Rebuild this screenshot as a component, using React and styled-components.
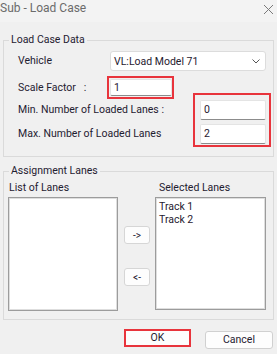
import React from 'react';
import styled, { createGlobalStyle } from 'styled-components';

const Global = createGlobalStyle`
  html, body {
    margin: 0;
    padding: 0;
    background: #f0f0f0;
  }
  body {
    font-family: Roboto, "Noto Sans", sans-serif;
    font-size: 10.5px;
    color: #1f2030;
  }
`;

const Window = styled.div`
  width: 277px;
  height: 354px;
  display: flex;
  flex-direction: column;
  background: #f0f0f0;
  overflow: hidden;
`;

const TitleBar = styled.div`
  height: 22px;
  display: flex;
  align-items: flex-start;
  justify-content: space-between;
  background: #f3f3f3;
  box-sizing: border-box;
  padding: 1px 3px 0 0;
`;

const Title = styled.span`
  font-size: 12px;
  line-height: 15px;
  color: #6b6b6b;
`;

const Group = styled.fieldset`
  margin: ${(p) => p.$top}px 3px 0 3px;
  padding: 0;
  border: 1px solid #dadada;
  min-width: 0;
`;

const Legend = styled.legend`
  margin-left: 5px;
  padding: 0 2px;
  font-size: 10.5px;
  line-height: 14px;
`;

const Row = styled.div`
  display: flex;
  align-items: center;
  margin-top: ${(p) => p.$top || 0}px;
  padding-left: 14px;
`;

const Label = styled.span`
  width: ${(p) => p.$w}px;
  flex: none;
  white-space: pre;
  line-height: 14px;
`;

const Select = styled.div`
  width: 156px;
  height: 20px;
  box-sizing: border-box;
  background: #fff;
  border: 1px solid #dcdcdc;
  border-radius: 3px;
  display: flex;
  align-items: center;
  justify-content: space-between;
  padding: 0 5px 0 3px;
`;

const Field = styled.div`
  width: ${(p) => p.$w}px;
  height: ${(p) => p.$h}px;
  box-sizing: border-box;
  background: #fff;
  border: 1px solid #e4e4e4;
  border-bottom: 1px solid #8c8c8c;
  border-radius: 2px;
  display: flex;
  align-items: center;
  padding-left: 3px;
  line-height: 14px;
`;

const Marked = styled.div`
  position: relative;
  &::after {
    content: "";
    position: absolute;
    top: ${(p) => p.$t}px;
    left: ${(p) => p.$l}px;
    right: ${(p) => p.$r}px;
    bottom: ${(p) => p.$b}px;
    border: 2px solid #e8343c;
    pointer-events: none;
  }
`;

const Stack = styled.div`
  display: flex;
  flex-direction: column;
  gap: 4px;
  width: ${(p) => (p.$w ? `${p.$w}px` : 'auto')};
`;

const Lanes = styled.div`
  display: flex;
  padding: 0 7px 8px 4px;
  margin-top: 3px;
`;

const Column = styled.div`
  display: flex;
  flex-direction: column;
  width: ${(p) => p.$w}px;
`;

const ColLabel = styled.span`
  line-height: 14px;
  margin: 0 0 2px ${(p) => p.$indent}px;
`;

const ListBox = styled.div`
  height: ${(p) => p.$h}px;
  box-sizing: border-box;
  background: #fff;
  border: 1px solid #9c9c9c;
  box-shadow: inset 0 0 0 1px #dedede;
  padding: 2px 3px;
  line-height: 13px;
`;

const Middle = styled.div`
  display: flex;
  flex-direction: column;
  width: 26px;
  margin: 0 5px 0 6px;
  padding-top: 45px;
  gap: 24px;
`;

const ArrowButton = styled.div`
  height: 18px;
  box-sizing: border-box;
  background: #fdfdfd;
  border: 1px solid #d6d6d6;
  border-radius: 3px;
  display: flex;
  align-items: center;
  justify-content: center;
  font-size: 10px;
`;

const Footer = styled.div`
  display: flex;
  justify-content: flex-end;
  align-items: flex-start;
  gap: 14px;
  padding: 9px 4px 0 0;
`;

const Button = styled.div`
  width: ${(p) => (p.$marked ? 67 : 68)}px;
  height: 18px;
  margin-top: ${(p) => (p.$marked ? 0 : 2)}px;
  box-sizing: border-box;
  background: #fdfdfd;
  border: ${(p) => (p.$marked ? '2px solid #e8343c' : '1px solid #d0d0d0')};
  border-radius: ${(p) => (p.$marked ? 0 : 3)}px;
  display: flex;
  align-items: center;
  justify-content: center;
  line-height: 14px;
`;

const Close = () => (
  <svg width="11" height="11" viewBox="0 0 11 11" style={{ marginTop: 3 }}>
    <path d="M1 1 L10 10 M10 1 L1 10" stroke="#7a7a7a" strokeWidth="1" />
  </svg>
);

const Chevron = () => (
  <svg width="8" height="5" viewBox="0 0 8 5">
    <path d="M0.5 0.5 L4 4 L7.5 0.5" stroke="#555" strokeWidth="1" fill="none" />
  </svg>
);

export default function App() {
  return (
    <>
      <Global />
      <Window>
        <TitleBar>
          <Title>Sub - Load Case</Title>
          <Close />
        </TitleBar>

        <Group $top={11}>
          <Legend>Load Case Data</Legend>
          <Row $top={4}>
            <Label $w={92}>Vehicle</Label>
            <Select>
              <span>VL:Load Model 71</span>
              <Chevron />
            </Select>
          </Row>
          <Row $top={8}>
            <Label $w={92}>Scale Factor   :</Label>
            <Marked $t={-3} $l={-3} $r={-2} $b={-3}>
              <Field $w={62} $h={17}>1</Field>
            </Marked>
          </Row>
          <Row $top={4} style={{ paddingBottom: 12, alignItems: 'stretch' }}>
            <Stack $w={182}>
              <Row style={{ padding: 0, height: 20 }}>
                <Label>Min. Number of Loaded Lanes :</Label>
              </Row>
              <Row style={{ padding: 0, height: 20 }}>
                <Label>Max. Number of Loaded Lanes</Label>
              </Row>
            </Stack>
            <Marked $t={-7} $l={-7} $r={-5} $b={-3}>
              <Stack>
                <Field $w={66} $h={20}>0</Field>
                <Field $w={66} $h={20}>2</Field>
              </Stack>
            </Marked>
          </Row>
        </Group>

        <Group $top={7}>
          <Legend>Assignment Lanes</Legend>
          <Lanes>
            <Column $w={110}>
              <ColLabel $indent={1}>List of Lanes</ColLabel>
              <ListBox $h={114} />
            </Column>
            <Middle>
              <ArrowButton>-&gt;</ArrowButton>
              <ArrowButton>&lt;-</ArrowButton>
            </Middle>
            <Column $w={111}>
              <ColLabel $indent={4}>Selected Lanes</ColLabel>
              <ListBox $h={113}>
                <div>Track 1</div>
                <div>Track 2</div>
              </ListBox>
            </Column>
          </Lanes>
        </Group>

        <Footer>
          <Button $marked>OK</Button>
          <Button>Cancel</Button>
        </Footer>
      </Window>
    </>
  );
}
